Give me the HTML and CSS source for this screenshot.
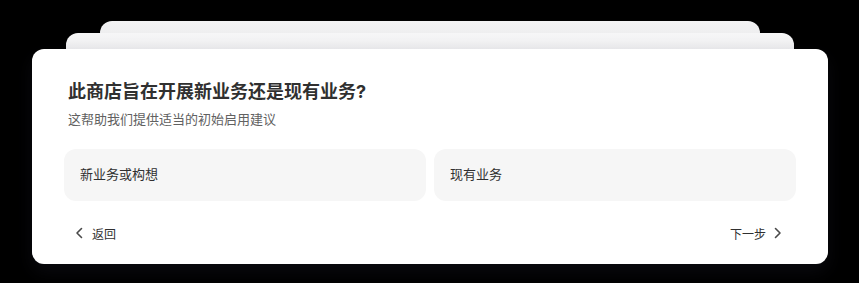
FILE: index.html
```html
<!DOCTYPE html>
<html lang="zh-CN">
<head>
<meta charset="utf-8">
<title>开店向导</title>
<link rel="stylesheet" href="styles.css">
</head>
<body>
<div class="stage">
  <div class="stack">
    <div class="ghost ghost-back"></div>
    <div class="ghost ghost-mid"></div>
    <section class="card">
      <header class="head">
        <h1 class="title">此商店旨在开展新业务还是现有业务?</h1>
        <p class="subtitle">这帮助我们提供适当的初始启用建议</p>
      </header>
      <div class="options">
        <button class="option">新业务或构想</button>
        <button class="option">现有业务</button>
      </div>
      <footer class="foot">
        <button class="nav nav-back">
          <svg class="chev" viewBox="0 0 16 16" width="16" height="16"><path d="M10.5 3.5 6 8l4.5 4.5" fill="none" stroke="currentColor" stroke-width="1.6" stroke-linecap="round" stroke-linejoin="round"/></svg>
          <span>返回</span>
        </button>
        <button class="nav nav-next">
          <span>下一步</span>
          <svg class="chev" viewBox="0 0 16 16" width="16" height="16"><path d="M5.5 3.5 10 8l-4.5 4.5" fill="none" stroke="currentColor" stroke-width="1.6" stroke-linecap="round" stroke-linejoin="round"/></svg>
        </button>
      </footer>
    </section>
  </div>
</div>
</body>
</html>
```
FILE: styles.css
```css
* { box-sizing: border-box; }
html, body {
  margin: 0;
  padding: 0;
  background: #000;
  width: 859px;
  height: 283px;
  overflow: hidden;
  font-family: "Inter", "Noto Sans CJK SC", sans-serif;
}
.stage {
  padding: 49px 31px 0 32px;
}
.stack {
  position: relative;
  width: 796px;
}
.ghost {
  position: absolute;
  border-radius: 12px;
  background: linear-gradient(#f3f3f4, #e3e3e5);
}
.ghost-back {
  left: 68px;
  right: 68px;
  top: -28px;
  height: 40px;
}
.ghost-mid {
  left: 34px;
  right: 34px;
  top: -16px;
  height: 40px;
  background: linear-gradient(#f6f6f7, #e6e6e8);
}
.card {
  position: relative;
  background: #fff;
  border-radius: 12px;
  padding: 31px 32px 13px;
  height: 215px;
  box-shadow: 0 8px 18px rgba(40, 40, 60, 0.25);
}
.head {
  padding: 0 4px;
}
.title {
  margin: 0;
  font-size: 18px;
  line-height: 24px;
  font-weight: 700;
  color: #303030;
}
.subtitle {
  margin: 5px 0 0;
  font-size: 13px;
  line-height: 20px;
  color: #616161;
}
.options {
  display: grid;
  grid-template-columns: 1fr 1fr;
  gap: 8px;
  margin-top: 20px;
}
.option {
  height: 52px;
  border: none;
  border-radius: 12px;
  background: #f6f6f6;
  text-align: left;
  padding: 0 16px 3px;
  font-family: inherit;
  font-size: 13px;
  color: #303030;
}
.foot {
  display: flex;
  justify-content: space-between;
  align-items: center;
  height: 32px;
  margin-top: 16px;
}
.nav {
  display: flex;
  align-items: center;
  border: none;
  background: none;
  font-family: inherit;
  font-size: 12px;
  color: #303030;
  padding: 0;
  height: 32px;
}
.nav-back {
  padding-left: 7px;
  gap: 5px;
}
.nav-next {
  padding-right: 10px;
  gap: 4px;
}
.chev {
  color: #4a4a4a;
  display: block;
}
```
